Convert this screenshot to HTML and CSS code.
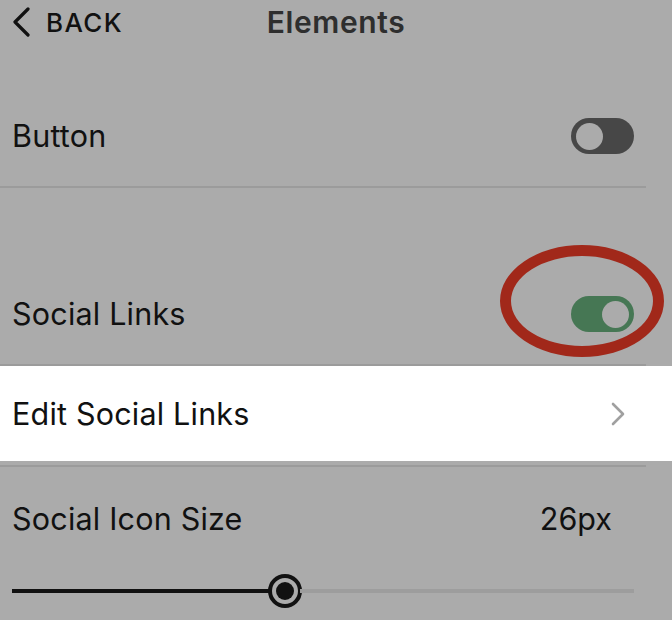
FILE: index.html
```html
<!DOCTYPE html>
<html>
<head>
<meta charset="utf-8">
<link rel="stylesheet" href="styles.css">
</head>
<body>
<div class="screen">
  <header class="topbar">
    <div class="back">
      <svg class="back-icon" width="22" height="30" viewBox="0 0 22 30"><path d="M18 2 L5 15 L18 28" fill="none" stroke="#111" stroke-width="3.2" stroke-linecap="round" stroke-linejoin="round"/></svg>
      <span>BACK</span>
    </div>
    <div class="title">Elements</div>
    <div></div>
  </header>

  <div class="row row-button">
    <span class="label">Button</span>
    <span class="toggle off"><span class="knob"></span></span>
  </div>
  <div class="divider"></div>

  <div class="row row-social">
    <span class="label">Social Links</span>
    <span class="toggle on"><span class="knob"></span></span>
    <span class="annotation"></span>
  </div>
  <div class="divider"></div>

  <div class="row row-edit">
    <span class="label">Edit Social Links</span>
    <svg class="chev" width="16" height="24" viewBox="0 0 16 24"><path d="M3 2 L13 12 L3 22" fill="none" stroke="#a0a0a0" stroke-width="2.6" stroke-linecap="round" stroke-linejoin="round"/></svg>
  </div>
  <div class="gap"></div>
  <div class="divider"></div>

  <div class="row row-size">
    <span class="label">Social Icon Size</span>
    <span class="value">26px</span>
  </div>
  <div class="slider">
    <div class="track-fill"></div>
    <div class="thumb"><span class="thumb-dot"></span></div>
    <div class="track-rest"></div>
  </div>
</div>
</body>
</html>
```
FILE: styles.css
```css
html, body {
  margin: 0;
  padding: 0;
  background: #ababab;
}
.screen {
  width: 672px;
  height: 620px;
  overflow: hidden;
  font-family: Inter, "Liberation Sans", Arial, sans-serif;
  color: #111;
}
.topbar {
  height: 44px;
  display: grid;
  grid-template-columns: 1fr auto 1fr;
  align-items: center;
}
.back {
  display: flex;
  align-items: center;
  padding-left: 10px;
  gap: 14px;
  font-size: 26px;
  font-weight: 500;
  letter-spacing: 1.4px;
}
.title {
  font-size: 30px;
  font-weight: 600;
  color: #2e2e2e;
  letter-spacing: 0.6px;
}
.row {
  display: flex;
  align-items: center;
  justify-content: space-between;
  padding: 0 38px 0 12px;
  position: relative;
}
.label {
  font-size: 30.5px;
  letter-spacing: 0.2px;
}
.row-button, .row-social {
  box-sizing: border-box;
  align-items: flex-end;
  padding-bottom: 32px;
}
.row-button {
  height: 142px;
}
.row-social {
  height: 176px;
}
.row-button .label, .row-social .label {
  line-height: 36px;
}
.divider {
  height: 2px;
  width: 646px;
  background: #9b9b9b;
}
.toggle {
  width: 63px;
  height: 36px;
  border-radius: 18px;
  display: flex;
  align-items: center;
  box-sizing: border-box;
  padding: 0 5px;
}
.toggle.off {
  background: #474747;
  justify-content: flex-start;
}
.toggle.on {
  background: #467754;
  justify-content: flex-end;
}
.knob {
  width: 27px;
  height: 27px;
  border-radius: 50%;
  background: #ababab;
}
.annotation {
  position: absolute;
  left: 500px;
  top: 57px;
  width: 164px;
  height: 112px;
  box-sizing: border-box;
  border: 11px solid #a1281a;
  border-radius: 50%;
}
.row-edit {
  background: #fff;
  height: 95px;
  padding-right: 46px;
}
.gap {
  height: 4px;
}
.row-size {
  height: 102px;
  padding-right: 60px;
}
.value {
  font-size: 30.5px;
}
.slider {
  height: 44px;
  display: flex;
  align-items: center;
  padding-left: 12px;
  width: 622px;
}
.track-fill {
  width: 258px;
  height: 4px;
  background: #111;
}
.thumb {
  width: 34px;
  height: 34px;
  box-sizing: border-box;
  border: 4px solid #111;
  border-radius: 50%;
  background: #ababab;
  display: flex;
  align-items: center;
  justify-content: center;
  margin: 0 -2px;
}
.thumb-dot {
  width: 18px;
  height: 18px;
  border-radius: 50%;
  background: #111;
}
.track-rest {
  flex: 1;
  height: 4px;
  background: #9d9d9d;
}
```
